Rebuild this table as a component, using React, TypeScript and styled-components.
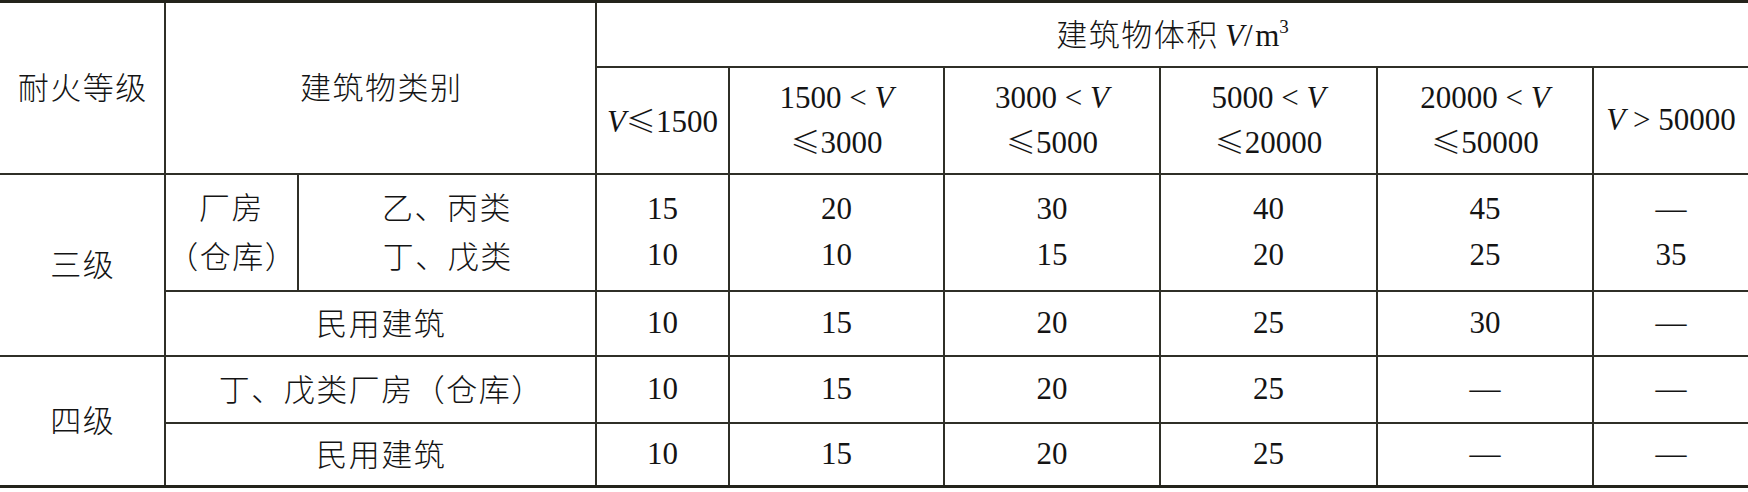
import React from "react";
import styled, { createGlobalStyle } from "styled-components";

const Global = createGlobalStyle`
  html, body { margin: 0; padding: 0; background: #ffffff; }
  body { font-family: "Liberation Serif", "Noto Sans CJK SC", serif; color: #141414; }
`;

const LINE = "#2f2f27";

const Table = styled.table`
  width: 1748px;
  border-collapse: collapse;
  table-layout: fixed;
  border-top: 3px solid #23231b;
  border-bottom: 3px solid #23231b;
`;

const Row = styled.tr<{ $h: number }>`
  height: ${(p) => p.$h}px;
`;

const Cell = styled.td<{ $head?: boolean }>`
  border: 2px solid ${LINE};
  padding: 0;
  text-align: center;
  vertical-align: middle;
  font-family: "Liberation Serif", "Noto Sans CJK SC", serif;
  font-size: 31px;
  line-height: ${(p) => (p.$head ? 43 : 46)}px;
  white-space: nowrap;
  &:first-child { border-left: none; }
  &:last-child { border-right: none; }
`;

const Han = styled.span`
  font-family: "Noto Sans CJK SC", sans-serif;
  font-weight: 300;
  font-size: 31px;
  letter-spacing: 1.5px;
  margin-right: -1.5px;
`;

const Leq = styled.span`
  font-family: "Noto Sans CJK SC", sans-serif;
  font-weight: 300;
  font-size: 30px;
`;

const Var = styled.i`
  font-style: italic;
`;

const Sup = styled.sup`
  font-size: 19px;
  line-height: 0;
  vertical-align: 13px;
`;

const widths = [165, 133, 298, 133, 215, 216, 217, 216, 155];

const rows3a = ["15", "20", "30", "40", "45", "—"];
const rows3b = ["10", "10", "15", "20", "25", "35"];
const civil3 = ["10", "15", "20", "25", "30", "—"];
const fact4 = ["10", "15", "20", "25", "—", "—"];
const civil4 = ["10", "15", "20", "25", "—", "—"];

const ranges = [
  ["1500", "3000"],
  ["3000", "5000"],
  ["5000", "20000"],
  ["20000", "50000"],
];

export default function App() {
  return (
    <>
      <Global />
      <Table>
        <colgroup>
          {widths.map((w, i) => (
            <col key={i} style={{ width: w }} />
          ))}
        </colgroup>
        <tbody>
          <Row $h={65}>
            <Cell rowSpan={2}><Han>耐火等级</Han></Cell>
            <Cell rowSpan={2} colSpan={2}><Han>建筑物类别</Han></Cell>
            <Cell colSpan={6}>
              <Han>建筑物体积</Han> <Var>V</Var>/&#8202;m<Sup>3</Sup>
            </Cell>
          </Row>
          <Row $h={107}>
            <Cell><Var>V</Var><Leq>≤</Leq>1500</Cell>
            {ranges.map(([a, b]) => (
              <Cell $head key={a}>
                {a} &lt; <Var>V</Var><br /><Leq>≤</Leq>{b}
              </Cell>
            ))}
            <Cell><Var>V</Var> &gt; 50000</Cell>
          </Row>
          <Row $h={117}>
            <Cell rowSpan={2}><Han>三级</Han></Cell>
            <Cell><Han>厂房<br />（仓库）</Han></Cell>
            <Cell><Han>乙、丙类<br />丁、戊类</Han></Cell>
            {rows3a.map((v, i) => (
              <Cell key={i}>{v}<br />{rows3b[i]}</Cell>
            ))}
          </Row>
          <Row $h={65}>
            <Cell colSpan={2}><Han>民用建筑</Han></Cell>
            {civil3.map((v, i) => (
              <Cell key={i}>{v}</Cell>
            ))}
          </Row>
          <Row $h={67}>
            <Cell rowSpan={2}><Han>四级</Han></Cell>
            <Cell colSpan={2}><Han>丁、戊类厂房（仓库）</Han></Cell>
            {fact4.map((v, i) => (
              <Cell key={i}>{v}</Cell>
            ))}
          </Row>
          <Row $h={64}>
            <Cell colSpan={2}><Han>民用建筑</Han></Cell>
            {civil4.map((v, i) => (
              <Cell key={i}>{v}</Cell>
            ))}
          </Row>
        </tbody>
      </Table>
    </>
  );
}
